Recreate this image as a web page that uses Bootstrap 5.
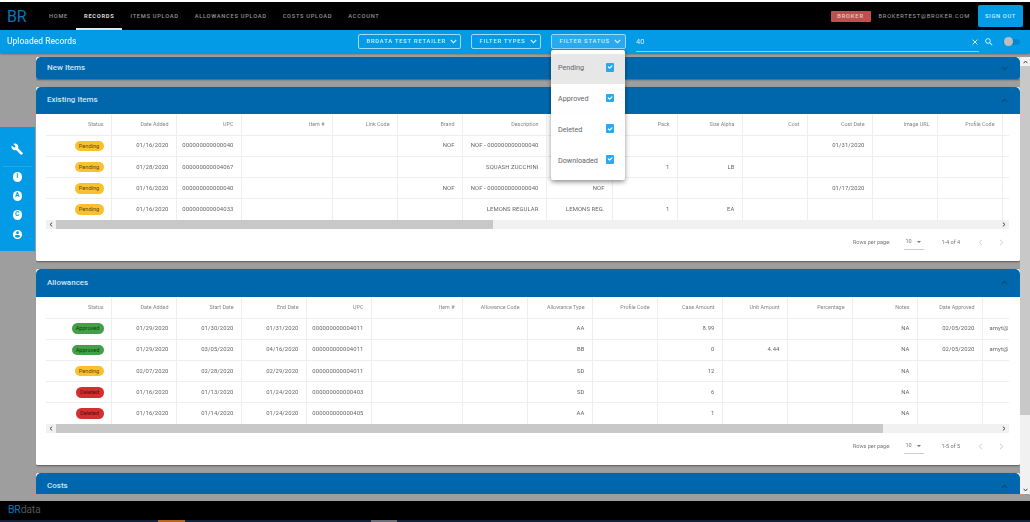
<!DOCTYPE html>
<html lang="en">
<head>
<meta charset="utf-8">
<title>Uploaded Records</title>
<link href="https://cdn.jsdelivr.net/npm/bootstrap@5.3.0/dist/css/bootstrap.min.css" rel="stylesheet">
<style>
html,body{height:522px;overflow:hidden}
body{font-family:Roboto,"Liberation Sans",sans-serif;background:#9e9e9e;padding-top:2px;display:flex;flex-direction:column;box-shadow:inset 0 2px 0 #fff}
.top-nav{height:28px;background:#000;padding:0;flex:none;flex-wrap:nowrap;opacity:.999}
.br-mark{width:41px;padding:1px 0 0 7px;margin:0;font-size:16px;line-height:1;color:#0277bd;font-weight:400;letter-spacing:-.2px}
.top-nav .nav-link{height:28px;padding:0 7px;line-height:28px;font-size:5.7px;font-weight:500;letter-spacing:.72px;color:#949494;text-transform:uppercase;white-space:nowrap}
.top-nav .nav-link.active{color:#d8d8d8;border-bottom:2px solid #e8e8e8;font-weight:700}
.role-tag{width:40px;height:11px;line-height:11px;text-align:center;background:#c0504f;color:#e9c4c3;font-size:5.8px;letter-spacing:.8px;font-weight:500;border-radius:1px}
.user-mail{font-size:5.8px;letter-spacing:.72px;color:#a5a5a5;margin:0 8px}
.sign-btn{width:45px;height:22px;margin-right:7px;padding:0;background:#039be5;border:0;border-radius:2px;color:#cfeefc;font-size:5.7px;font-weight:500;letter-spacing:.7px}
.sub-bar{height:23px;flex:none;background:#039be5;box-shadow:0 1px 2px rgba(0,0,0,.4);position:relative;z-index:3;opacity:.999}
.sub-title{width:351px;margin:0 0 0 7px;font-size:8.5px;font-weight:500;color:#d4eefb;line-height:1}
.flt-wrap{position:relative;margin-right:10px}
.flt-btn{height:15px;padding:0 0 0 7.5px;display:flex;align-items:center;gap:4px;background:transparent;border:1px solid #9adcfb;border-radius:2px;color:#d4eefb;font-size:5.8px;font-weight:500;letter-spacing:.78px;white-space:nowrap}
.flt-a{width:103px}.flt-b{width:70px}.flt-c{width:75px;background:#29a9ee}
.flt-menu{display:block;top:16px;left:0;width:74px;min-width:0;padding:3.5px 0 0;height:130px;border:0;border-radius:2px;margin:0;box-shadow:0 2px 5px rgba(0,0,0,.45);position:absolute}
.flt-row{height:30.7px;padding:0 11px 0 7px;display:flex;align-items:center;justify-content:space-between;font-size:7.2px;color:#666;background:#fff}
.flt-row.on{background:#e8e8e8}
.flt-row .form-check-input{width:8.5px;height:8.5px;margin:0 0 3px;border:0;border-radius:1px;background-color:#29a9f0}
.srch{width:343px;height:19px;margin-top:1px;border-bottom:1px solid #81d4fa;display:flex;align-items:center;padding-right:1px}
.srch input{flex:1;min-width:0;height:15px;padding:0;border:0;border-radius:0;background:transparent;color:#d4eefb;font-size:7.5px;box-shadow:none}
.srch-icon{margin-left:4.500px;margin-right:9.500px}
.tgl{width:17px;height:6px;border-radius:3px;background:#0288d1;position:relative;margin-right:10px}
.tgl-dot{position:absolute;left:1px;top:-1.5px;width:8.5px;height:8.5px;border-radius:50%;background:#bdbdbd}
.stage{flex:1;min-height:0;display:flex;padding:4px 0 6.5px;overflow:hidden}
.side-slot{width:36px;flex:none}
.side-menu{width:34.5px;height:123.5px;margin-top:70px;background:#039be5;display:flex;flex-direction:column;align-items:center;padding-top:15.5px}
.side-line{width:29px;height:1px;background:#27a8e8;margin:11px 0 1px}
.side-dot{width:9.500px;height:9.500px;border-radius:50%;background:#fff;color:#039be5;font-size:6.500px;font-weight:700;line-height:9.500px;text-align:center;margin-bottom:9.500px}
.cards{flex:1;min-width:0;overflow:hidden;opacity:.999}
.rec-card{border:0;border-radius:2px;margin-bottom:7.5px;box-shadow:0 1px 2px rgba(0,0,0,.45);overflow:hidden}
.rec-head{height:27.6px;padding:0 12px 0 11px;background:#0067ac;border:0;border-radius:0;display:flex;align-items:center;justify-content:space-between;color:#cfe5f5;font-size:8px;font-weight:500;flex:none}
.rec-head.slim{height:22px}
.rec-head.tall{height:28.4px}
.rec-body{padding:0 11px 0 10px;background:#fff}
.tbl-clip{overflow:hidden}
.rec-table{table-layout:fixed;margin:0;border-collapse:collapse}
.w-items{width:1021px}.w-allow{width:1001px}
.c65{width:65px}.c66{width:66px}.c84{width:84px}.c91{width:91px}
.rec-table th,.rec-table td{height:21.2px;padding:0 7px 0 0;text-align:right;vertical-align:middle;white-space:nowrap;overflow:hidden;border:0;border-bottom:1px solid #eee;border-right:1px solid #eee;background:#fff;box-shadow:none}
.rec-table th{font-size:5.4px;font-weight:400;color:#858585}
.rec-table td{font-size:5.9px;color:#666;letter-spacing:.1px}
.rec-table tr:last-child td{border-bottom:0}
.rec-table td.by-cell{text-align:left;padding-left:7px;padding-right:0}
.rec-table .pill{display:inline-block;height:10.5px;line-height:10.5px;border-radius:5.3px;font-size:5.6px;letter-spacing:0;color:#5b4a12;vertical-align:middle;text-align:center}
.pill.pen{background:#fbc02d;width:29px}
.pill.app{background:#43a047;color:#0f3d12;width:32px}
.pill.del{background:#d32f2f;color:#4c0f0f;width:28px}
.h-bar{height:9px;background:#f1f1f1;display:flex;align-items:center}
.h-arrow{width:9.5px;flex:none;display:flex;justify-content:center}
.h-thumb{height:9px;background:#c8c8c8}
.th-a{width:437px}.th-b{width:827px}
.h-fill{flex:1}
.pager{height:32px;padding:0 5px 6px 0;display:flex;align-items:center;justify-content:flex-end;font-size:5.5px;color:#757575}
.pg-sel{width:20px;height:15px;margin:0 17px 0 14px;padding:0 0 0 1px;display:flex;align-items:center;justify-content:space-between;border-bottom:1px solid #ccc}
.pg-next{margin-left:16px}.pg-prev{margin-left:18px}
.caret-dn{width:0;height:0;border-left:2.5px solid transparent;border-right:2.5px solid transparent;border-top:2.5px solid #757575;margin-right:3px}
.v-bar{width:10px;flex:none;background:#f1f1f1;display:flex;flex-direction:column;align-items:stretch}
.v-arrow{height:9px;display:flex;align-items:center;justify-content:center;flex:none}
.v-thumb{height:349px;background:#c8c8c8;flex:none}
.v-fill{flex:1}
.foot{height:19.5px;background:#000;flex:none;padding-left:8px;display:flex;align-items:center;opacity:.999}
.foot-logo{font-size:10.5px;line-height:1;letter-spacing:-.2px;color:#555}
.foot-logo b{font-weight:400;color:#0277bd}
.task-strip{height:2px;background:#14233c;flex:none;display:flex}
.ts-o{width:27px;margin-left:158px;background:#b7651f}
.ts-g{width:26px;margin-left:186px;background:#6c6f77}
</style>
</head>
<body>
<nav class="navbar navbar-expand top-nav">
  <span class="navbar-brand br-mark">BR</span>
  <ul class="navbar-nav">
    <li class="nav-item"><a class="nav-link" href="#">Home</a></li>
    <li class="nav-item"><a class="nav-link active" href="#">Records</a></li>
    <li class="nav-item"><a class="nav-link" href="#">Items Upload</a></li>
    <li class="nav-item"><a class="nav-link" href="#">Allowances Upload</a></li>
    <li class="nav-item"><a class="nav-link" href="#">Costs Upload</a></li>
    <li class="nav-item"><a class="nav-link" href="#">Account</a></li>
  </ul>
  <div class="ms-auto d-flex align-items-center">
    <span class="role-tag">BROKER</span>
    <span class="user-mail">BROKERTEST@BROKER.COM</span>
    <button class="btn sign-btn" type="button">SIGN OUT</button>
  </div>
</nav>
<div class="sub-bar d-flex align-items-center">
  <h1 class="sub-title">Uploaded Records</h1>
  <div class="flt-wrap"><button class="btn flt-btn flt-a" type="button">BRDATA TEST RETAILER <svg width="7" height="5" viewBox="0 0 7 5"><path d="M.8 1 3.5 3.7 6.2 1" fill="none" stroke="#d4eefb" stroke-width="1.1"/></svg></button></div>
  <div class="flt-wrap"><button class="btn flt-btn flt-b" type="button">FILTER TYPES <svg width="7" height="5" viewBox="0 0 7 5"><path d="M.8 1 3.5 3.7 6.2 1" fill="none" stroke="#d4eefb" stroke-width="1.1"/></svg></button></div>
  <div class="flt-wrap"><button class="btn flt-btn flt-c" type="button">FILTER STATUS <svg width="7" height="5" viewBox="0 0 7 5"><path d="M.8 1 3.5 3.7 6.2 1" fill="none" stroke="#d4eefb" stroke-width="1.1"/></svg></button>
    <div class="dropdown-menu show flt-menu">
      <label class="flt-row on">Pending <input class="form-check-input" type="checkbox" checked></label>
      <label class="flt-row">Approved <input class="form-check-input" type="checkbox" checked></label>
      <label class="flt-row">Deleted <input class="form-check-input" type="checkbox" checked></label>
      <label class="flt-row">Downloaded <input class="form-check-input" type="checkbox" checked></label>
    </div>
  </div>
  <div class="srch">
    <input class="form-control" type="text" value="40" aria-label="Search">
    <svg width="6" height="6" viewBox="0 0 6 6"><path d="M.6.6 5.4 5.4M5.4.6.6 5.4" stroke="#d4eefb" stroke-width="1"/></svg>
  </div>
  <svg class="srch-icon" width="10" height="10" viewBox="0 0 24 24"><path fill="#e3f5fe" d="M15.5 14h-.79l-.28-.27C15.41 12.59 16 11.11 16 9.5 16 5.91 13.09 3 9.500 3S3 5.910 3 9.500 5.910 16 9.500 16c1.610 0 3.090-.59 4.230-1.570l.27.28v.79l5 4.990L20.490 19l-4.990-5zm-6 0C7.010 14 5 11.990 5 9.500S7.010 5 9.500 5 14 7.010 14 9.500 11.990 14 9.500 14z"/></svg>
  <span class="tgl"><span class="tgl-dot"></span></span>
</div>
<main class="stage">
  <div class="side-slot">
    <div class="side-menu">
      <svg width="12.5" height="12.5" viewBox="0 0 24 24"><path fill="#fff" d="M22.700 19l-9.100-9.100c.9-2.300.4-5-1.500-6.900-2-2-5-2.400-7.400-1.300L9 6 6 9 1.600 4.700C.4 7.100.9 10.100 2.900 12.100c1.900 1.900 4.600 2.400 6.900 1.500l9.100 9.100c.4.4 1 .4 1.400 0l2.300-2.300c.5-.4.5-1.100.1-1.400z"/></svg>
      <span class="side-line"></span>
      <span class="side-dot mt-1">I</span>
      <span class="side-dot">A</span>
      <span class="side-dot">C</span>
      <svg width="11" height="11" viewBox="0 0 24 24"><path fill="#fff" d="M12 2C6.480 2 2 6.480 2 12s4.480 10 10 10 10-4.480 10-10S17.520 2 12 2zm0 3c1.660 0 3 1.340 3 3s-1.340 3-3 3-3-1.340-3-3 1.340-3 3-3zm0 14.200c-2.500 0-4.710-1.280-6-3.220.03-1.990 4-3.080 6-3.080 1.990 0 5.970 1.090 6 3.080-1.290 1.940-3.500 3.220-6 3.220z"/></svg>
    </div>
  </div>
  <div class="cards">
    <section class="card rec-card">
      <div class="card-header rec-head slim">New Items <svg width="7" height="5" viewBox="0 0 7 5"><path d="M.8 1 3.500 3.700 6.200 1" fill="none" stroke="#024f85" stroke-width="1.1"/></svg></div>
    </section>
    <section class="card rec-card">
      <div class="card-header rec-head">Existing Items <svg width="7" height="5" viewBox="0 0 7 5"><path d="M.8 4 3.500 1.300 6.200 4" fill="none" stroke="#024f85" stroke-width="1.1"/></svg></div>
      <div class="rec-body">
        <div class="tbl-clip">
          <table class="table rec-table w-items">
            <colgroup><col class="c65"><col class="c65"><col class="c65"><col class="c91"><col class="c65"><col class="c65"><col class="c84"><col class="c66"><col class="c65"><col class="c65"><col class="c65"><col class="c65"><col class="c65"><col class="c65"><col class="c65"></colgroup>
            <thead><tr><th>Status</th><th>Date Added</th><th>UPC</th><th>Item #</th><th>Link Code</th><th>Brand</th><th>Description</th><th></th><th>Pack</th><th>Size Alpha</th><th>Cost</th><th>Cost Date</th><th>Image URL</th><th>Profile Code</th><th></th></tr></thead>
            <tbody>
              <tr><td><span class="pill pen">Pending</span></td><td>01/16/2020</td><td>000000000000040</td><td></td><td></td><td>NOF</td><td>NOF - 000000000000040</td><td></td><td></td><td></td><td></td><td>01/31/2020</td><td></td><td></td><td></td></tr>
              <tr><td><span class="pill pen">Pending</span></td><td>01/28/2020</td><td>000000000004067</td><td></td><td></td><td></td><td>SQUASH ZUCCHINI</td><td></td><td>1</td><td>LB</td><td></td><td></td><td></td><td></td><td></td></tr>
              <tr><td><span class="pill pen">Pending</span></td><td>01/16/2020</td><td>000000000000040</td><td></td><td></td><td>NOF</td><td>NOF - 000000000000040</td><td>NOF</td><td></td><td></td><td></td><td>01/17/2020</td><td></td><td></td><td></td></tr>
              <tr><td><span class="pill pen">Pending</span></td><td>01/16/2020</td><td>000000000004033</td><td></td><td></td><td></td><td>LEMONS REGULAR</td><td>LEMONS REG.</td><td>1</td><td>EA</td><td></td><td></td><td></td><td></td><td></td></tr>
            </tbody>
          </table>
        </div>
        <div class="h-bar"><span class="h-arrow"><svg width="4" height="5" viewBox="0 0 4 5"><path d="M3.200.6 1 2.500 3.200 4.400" fill="none" stroke="#444" stroke-width="1"/></svg></span><span class="h-thumb th-a"></span><span class="h-fill"></span><span class="h-arrow"><svg width="4" height="5" viewBox="0 0 4 5"><path d="M.8.6 3 2.500.8 4.400" fill="none" stroke="#444" stroke-width="1"/></svg></span></div>
        <div class="pager"><span>Rows per page:</span><span class="pg-sel"><span>10</span><span class="caret-dn"></span></span><span>1-4 of 4</span><svg class="pg-prev" width="5" height="7" viewBox="0 0 5 7"><path d="M4 .8 1.200 3.500 4 6.200" fill="none" stroke="#ccc" stroke-width="1"/></svg><svg class="pg-next" width="5" height="7" viewBox="0 0 5 7"><path d="M1 .8 3.800 3.500 1 6.200" fill="none" stroke="#ccc" stroke-width="1"/></svg></div>
      </div>
    </section>
    <section class="card rec-card">
      <div class="card-header rec-head tall">Allowances <svg width="7" height="5" viewBox="0 0 7 5"><path d="M.8 4 3.500 1.300 6.200 4" fill="none" stroke="#024f85" stroke-width="1.1"/></svg></div>
      <div class="rec-body">
        <div class="tbl-clip">
          <table class="table rec-table w-allow">
            <colgroup><col class="c65"><col class="c65"><col class="c65"><col class="c65"><col class="c65"><col class="c91"><col class="c65"><col class="c65"><col class="c65"><col class="c65"><col class="c65"><col class="c65"><col class="c65"><col class="c65"><col class="c65"></colgroup>
            <thead><tr><th>Status</th><th>Date Added</th><th>Start Date</th><th>End Date</th><th>UPC</th><th>Item #</th><th>Allowance Code</th><th>Allowance Type</th><th>Profile Code</th><th>Case Amount</th><th>Unit Amount</th><th>Percentage</th><th>Notes</th><th>Date Approved</th><th></th></tr></thead>
            <tbody>
              <tr><td><span class="pill app">Approved</span></td><td>01/29/2020</td><td>01/30/2020</td><td>01/31/2020</td><td>000000000004011</td><td></td><td></td><td>AA</td><td></td><td>8.99</td><td></td><td></td><td>NA</td><td>02/05/2020</td><td class="by-cell">amyt@</td></tr>
              <tr><td><span class="pill app">Approved</span></td><td>01/29/2020</td><td>03/05/2020</td><td>04/16/2020</td><td>000000000004011</td><td></td><td></td><td>BB</td><td></td><td>0</td><td>4.44</td><td></td><td>NA</td><td>02/05/2020</td><td class="by-cell">amyt@</td></tr>
              <tr><td><span class="pill pen">Pending</span></td><td>02/07/2020</td><td>02/28/2020</td><td>02/29/2020</td><td>000000000004011</td><td></td><td></td><td>SD</td><td></td><td>12</td><td></td><td></td><td>NA</td><td></td><td></td></tr>
              <tr><td><span class="pill del">Deleted</span></td><td>01/16/2020</td><td>01/13/2020</td><td>01/24/2020</td><td>000000000000403</td><td></td><td></td><td>SD</td><td></td><td>6</td><td></td><td></td><td>NA</td><td></td><td></td></tr>
              <tr><td><span class="pill del">Deleted</span></td><td>01/16/2020</td><td>01/14/2020</td><td>01/24/2020</td><td>000000000000405</td><td></td><td></td><td>AA</td><td></td><td>1</td><td></td><td></td><td>NA</td><td></td><td></td></tr>
            </tbody>
          </table>
        </div>
        <div class="h-bar"><span class="h-arrow"><svg width="4" height="5" viewBox="0 0 4 5"><path d="M3.200.6 1 2.500 3.200 4.400" fill="none" stroke="#444" stroke-width="1"/></svg></span><span class="h-thumb th-b"></span><span class="h-fill"></span><span class="h-arrow"><svg width="4" height="5" viewBox="0 0 4 5"><path d="M.8.6 3 2.500.8 4.400" fill="none" stroke="#444" stroke-width="1"/></svg></span></div>
        <div class="pager"><span>Rows per page:</span><span class="pg-sel"><span>10</span><span class="caret-dn"></span></span><span>1-5 of 5</span><svg class="pg-prev" width="5" height="7" viewBox="0 0 5 7"><path d="M4 .8 1.200 3.500 4 6.200" fill="none" stroke="#ccc" stroke-width="1"/></svg><svg class="pg-next" width="5" height="7" viewBox="0 0 5 7"><path d="M1 .8 3.800 3.500 1 6.200" fill="none" stroke="#ccc" stroke-width="1"/></svg></div>
      </div>
    </section>
    <section class="card rec-card">
      <div class="card-header rec-head">Costs <svg width="7" height="5" viewBox="0 0 7 5"><path d="M.8 4 3.500 1.300 6.200 4" fill="none" stroke="#024f85" stroke-width="1.100"/></svg></div>
    </section>
  </div>
  <div class="v-bar">
    <span class="v-arrow"><svg width="5" height="4" viewBox="0 0 5 4"><path d="M.6 3.200 2.500 1 4.400 3.200" fill="none" stroke="#444" stroke-width="1"/></svg></span>
    <span class="v-thumb"></span><span class="v-fill"></span>
    <span class="v-arrow"><svg width="5" height="4" viewBox="0 0 5 4"><path d="M.6.8 2.500 3 4.400.8" fill="none" stroke="#444" stroke-width="1"/></svg></span>
  </div>
</main>
<footer class="foot"><span class="foot-logo"><b>BR</b>data</span></footer>
<div class="task-strip"><span class="ts-o"></span><span class="ts-g"></span></div>
<script src="https://cdn.jsdelivr.net/npm/bootstrap@5.3.0/dist/js/bootstrap.bundle.min.js"></script>
</body>
</html>
